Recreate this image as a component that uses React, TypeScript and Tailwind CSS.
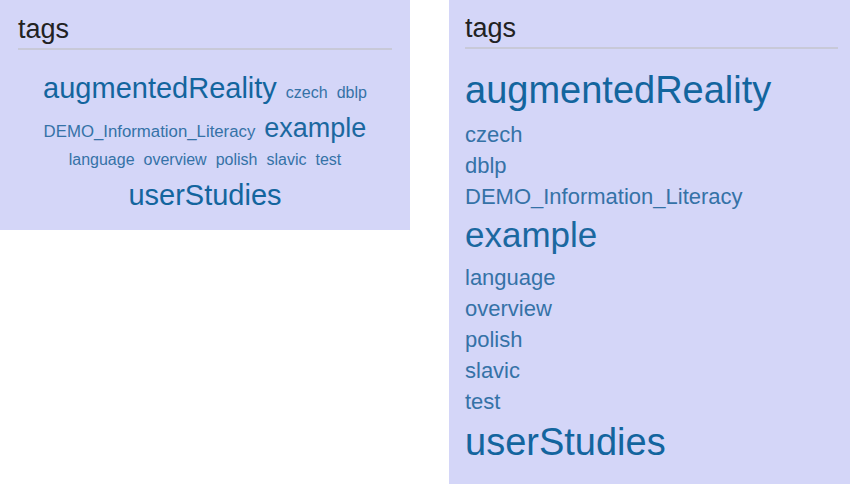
const tags = [
  { name: "augmentedReality", big: true },
  { name: "czech" },
  { name: "dblp" },
  { name: "DEMO_Information_Literacy", wide: true },
  { name: "example", mid: true },
  { name: "language" },
  { name: "overview" },
  { name: "polish" },
  { name: "slavic" },
  { name: "test" },
  { name: "userStudies", big: true },
];

function Heading({ top }: { top: "left" | "right" }) {
  return (
    <div className={top === "left" ? "pt-[13px]" : "pt-[12px]"}>
      <h2 className="text-[27px] leading-[32px] text-[#222222] font-normal">tags</h2>
      <div className="mt-[3px] h-[2px] bg-[#c8c9d8]" />
    </div>
  );
}

function TagCloud() {
  return (
    <div className="mt-[17px] flex flex-wrap justify-center items-baseline gap-x-[9px]">
      {tags.map((t) => (
        <a
          key={t.name}
          href="#"
          className={
            t.big
              ? "text-[29px] leading-[43px] text-[#13659e]"
              : t.mid
              ? "text-[27px] leading-[36px] text-[#1b68a0]"
              : t.wide
              ? "text-[16.8px] leading-[28px] text-[#3572a7]"
              : "text-[16px] leading-[28px] text-[#3572a7]"
          }
        >
          {t.name}
        </a>
      ))}
    </div>
  );
}

function TagList() {
  return (
    <ul className="mt-[16px] flex flex-col items-start">
      {tags.map((t) => (
        <li
          key={t.name}
          className={
            t.big
              ? "text-[38px] leading-[50px] text-[#13659e] mb-[4px]"
              : t.mid
              ? "text-[35px] leading-[46px] text-[#1b68a0] mb-[4px]"
              : "text-[22px] leading-[31px] text-[#3572a7]"
          }
        >
          <a href="#">{t.name}</a>
        </li>
      ))}
    </ul>
  );
}

export default function App() {
  return (
    <div
      className="flex items-start w-[850px] h-[484px] bg-white overflow-hidden"
      style={{ fontFamily: '"Liberation Sans", Arial, sans-serif' }}
    >
      <section className="w-[410px] h-[230px] shrink-0 bg-[#d4d6f8] px-[18px]">
        <Heading top="left" />
        <TagCloud />
      </section>
      <section className="ml-[39px] flex-1 h-[484px] bg-[#d4d6f8] pl-[16px] pr-[12px]">
        <Heading top="right" />
        <TagList />
      </section>
    </div>
  );
}
